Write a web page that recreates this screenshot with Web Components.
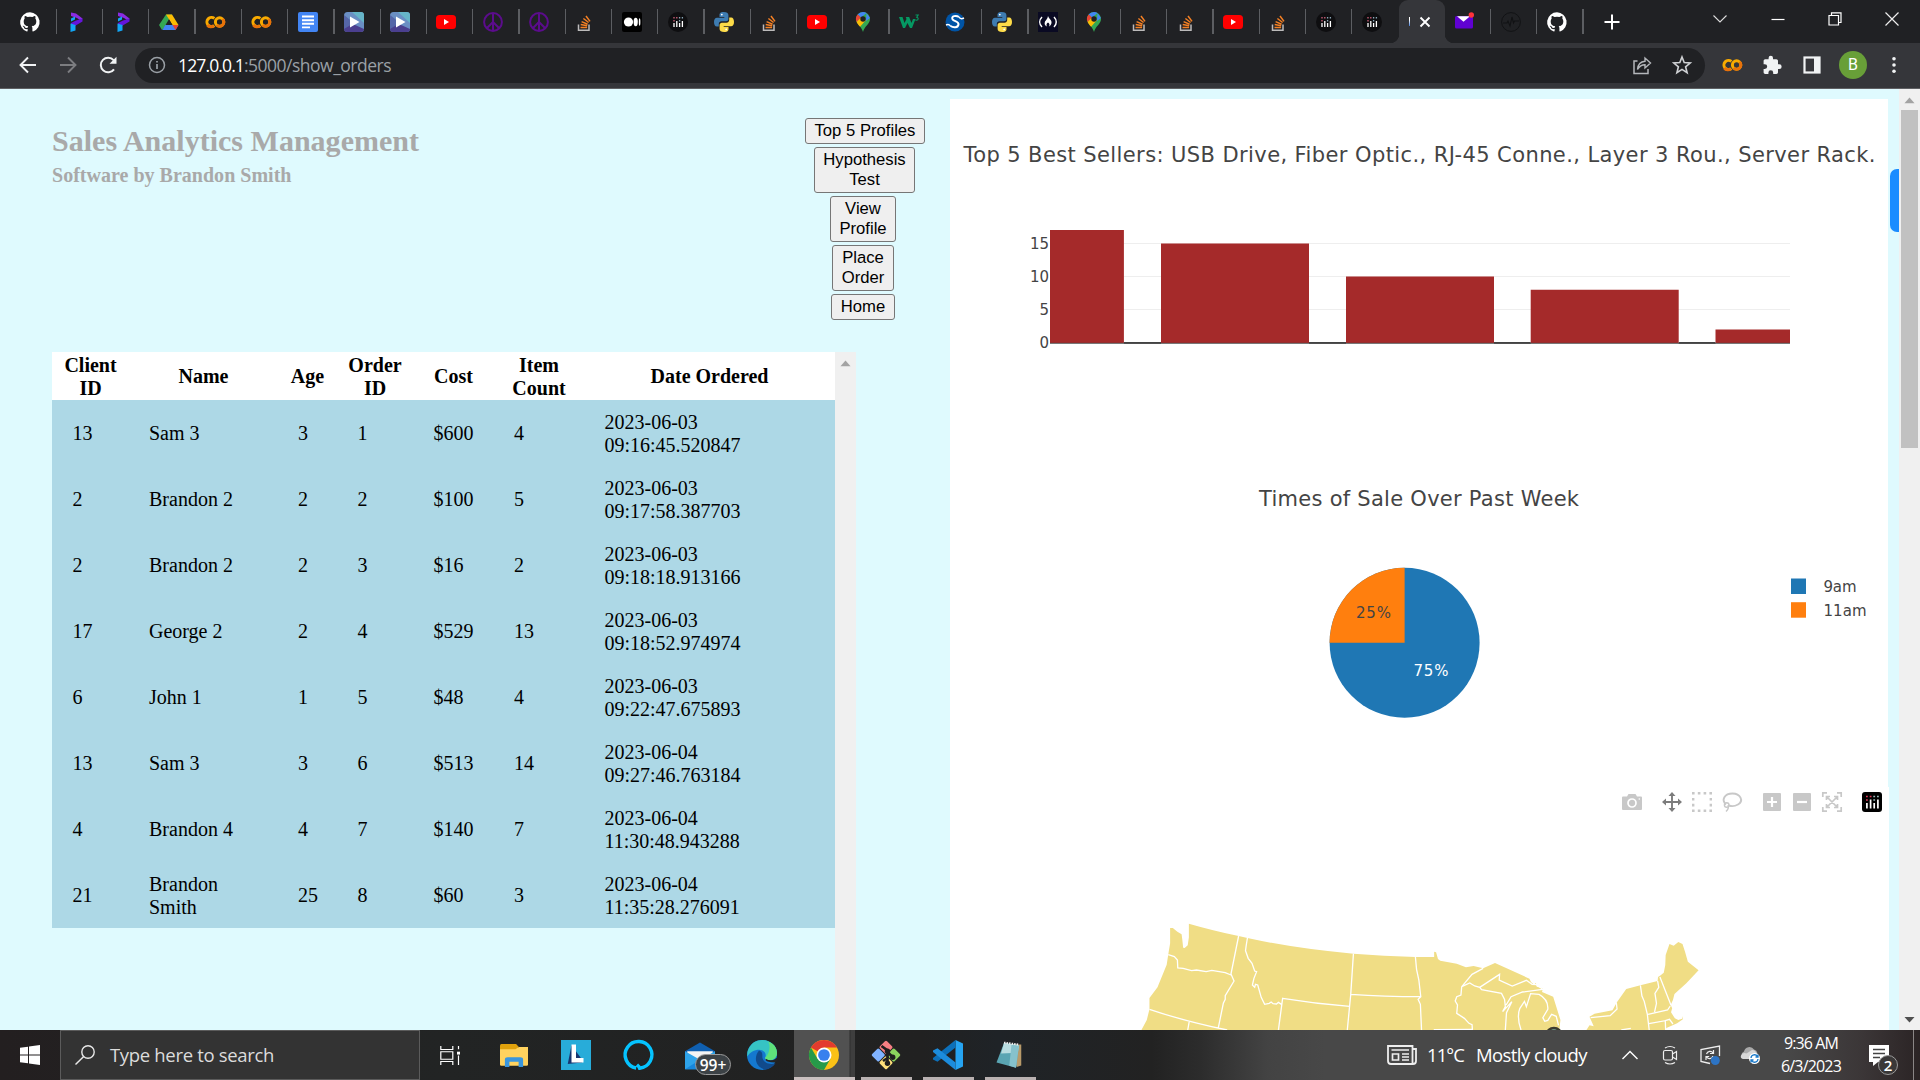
<!DOCTYPE html>
<html lang="en">
<head>
<meta charset="utf-8">
<title>Sales Analytics Management</title>
<style>
html,body{margin:0;height:100%;overflow:hidden;background:#dffafe}
</style>
</head>
<body>
<desktop-screen></desktop-screen>
<script>
const define = (name, html, setup) => {
  const t = document.createElement('template');
  t.innerHTML = html;
  customElements.define(name, class extends HTMLElement {
    connectedCallback() {
      if (this.shadowRoot) return;
      this.attachShadow({ mode: 'open' }).appendChild(t.content.cloneNode(true));
      if (setup) setup.call(this, this.shadowRoot);
    }
  });
};

/* ---------- icons ---------- */
const so = '<path d="M3.5 12.5v5.7h10.5v-5.7" fill="none" stroke="#bcbbbb" stroke-width="1.5"/><path d="M5.5 15.5h6.6M5.7 12.6l6.5 1.2M6.6 9.6l6 2.6M8.4 6.5l5.2 4M11 4l4 5.4" stroke="#f48024" stroke-width="1.5"/>';
const colab = '<g fill="none" stroke-width="3"><path d="M9.4 6.4a4.6 4.6 0 1 0 0 7.2" stroke="#f9ab00"/><circle cx="14.6" cy="10" r="4.2" stroke="#f9ab00"/><path d="M11.6 13a4.2 4.2 0 0 0 6-6" stroke="#e8710a"/><path d="M2.4 13a4.3 4.3 0 0 0 6.4.6" stroke="#e8710a"/></g>';
const bars = '<g stroke-width="1.3"><path d="M6 11v4M8.8 9v6M11.6 11v4M14.4 9v6" stroke="#fff"/><path d="M6 5v1.4M6 8v1.4M8.800 5v1.4" stroke="#d0607a"/><path d="M11.600 5v1.4M11.600 8v1.4M14.400 5v1.4" stroke="#8aa8b8"/></g>';
const ICONS = {
  github: '<path fill="#fff" d="M10 0.300a9.900 9.900 0 0 0-3.100 19.300c.5.1.7-.2.7-.5v-2c-2.800.6-3.400-1.200-3.400-1.200-.4-1.100-1.100-1.500-1.100-1.500-.9-.6.1-.6.1-.6 1 .1 1.500 1 1.500 1 .9 1.600 2.400 1.100 2.900.9.1-.7.4-1.100.6-1.400-2.200-.3-4.500-1.100-4.500-5 0-1.100.4-2 1-2.700-.1-.2-.4-1.200.1-2.600 0 0 .8-.3 2.700 1a9.600 9.600 0 0 1 5 0c1.900-1.300 2.700-1 2.700-1 .5 1.400.2 2.400.1 2.600.6.7 1 1.600 1 2.700 0 3.900-2.400 4.700-4.600 5 .4.300.7.900.7 1.900v2.800c0 .3.200.6.7.5A9.900 9.900 0 0 0 10 .3z"/>',
  pro: '<path d="M5 0.500L10 1.500 16.500 6.500 15.500 9 11 6 5 4z" fill="#8a2be2"/><path d="M16.500 6.500v3L8 14.500l-3-1V11l5-2.500z" fill="#6414dc"/><path d="M5 6.500l4-2v3L5 9.500zM4.500 11.500L9.500 13v5.500l-5 1.500z" fill="#12a5f4"/>',
  drive: '<path d="M7 2.500h6l-4 7-3 5.200-3 3.300-3-5z" fill="#34a853"/><path d="M7 2.500h6l6.500 10.500h-6z" fill="#fbbc04"/><path d="M3.300 18l3-5h13.200l-3 5z" fill="#4285f4"/><path d="M10 7.200L13.400 13H6.600z" fill="#202124"/><path d="M13.500 13h6l-3 5z" fill="#ea4335"/>',
  colab,
  docs: '<rect width="20" height="20" rx="2" fill="#4285f4"/><path d="M4 4.500h12M4 8.200h12M4 11.800h12M4 15.400h8" stroke="#fff" stroke-width="1.900"/>',
  play: '<rect width="20" height="20" rx="3.500" fill="#6a8fc4"/><path d="M3 0h14a3 3 0 0 1 3 3v8L8 0z" fill="#66b5c8"/><path d="M0 8l20 9a3 3 0 0 1-3 3H3a3 3 0 0 1-3-3z" fill="#4b3f8f"/><path d="M0 3l10 8L0 17z" fill="#5566a8"/><path d="M6 4.500l9.500 5.500L6 15.500z" fill="#fff"/>',
  youtube: '<rect y="3" width="20" height="14" rx="3.500" fill="#f00"/><path d="M8 7l5 3-5 3z" fill="#fff"/>',
  peace: '<g fill="none" stroke="#5b0c8c" stroke-width="2"><circle cx="10" cy="10" r="8.900"/><path d="M10 1v18M10 10l-6 6M10 10l6 6"/></g>',
  so,
  medium: '<rect width="20" height="20" rx="2" fill="#000"/><circle cx="6.500" cy="10" r="4.600" fill="#fff"/><ellipse cx="13.700" cy="10" rx="2.100" ry="4.200" fill="#fff"/><ellipse cx="17.600" cy="10" rx=".8" ry="3.800" fill="#fff"/>',
  plotly: '<circle cx="10" cy="10" r="10" fill="#0e0e10"/>' + bars,
  plotsq: '<rect width="20" height="20" rx="3" fill="#000"/><g stroke-width="1.700"><path d="M4.900 11v5.500M12.200 11v5.500" stroke="#fff"/><path d="M8.600 7.500v9M15.900 7.500v9" stroke="#fff"/><path d="M4 4.500h1.800M4 8h1.800M7.700 4.500h1.800" stroke="#e0395a"/><path d="M11.300 4.500h1.800M11.300 8h1.800M15 4.500h1.800" stroke="#9bb"/></g>',
  python: '<path d="M9.800 0C6 0 5.500 1.500 5.500 3v2h4.800v.8H3C1 5.800 0 7.500 0 10s1 4.500 2.800 4.500h2V12c0-1.600 1.200-2.700 2.700-2.700h4.600c1.300 0 2.300-1 2.300-2.300V3c0-2-1.700-3-4.600-3z" fill="#3e7cb1"/><path d="M10.200 20c3.800 0 4.300-1.500 4.300-3v-2H9.700v-.8H17c2 0 3-1.700 3-4.200s-1-4.500-2.800-4.500h-2V8c0 1.600-1.200 2.700-2.700 2.700H7.900c-1.300 0-2.300 1-2.300 2.300v4c0 2 1.700 3 4.600 3z" fill="#fddb48"/><circle cx="7.800" cy="2.600" r=".9" fill="#fff"/><circle cx="12.200" cy="17.400" r=".9" fill="#fff"/>',
  maps: '<path d="M10 0a7 7 0 0 0-7 7c0 5 5.500 7 7 13 1.500-6 7-8 7-13a7 7 0 0 0-7-7z" fill="#34a853"/><path d="M10 0a7 7 0 0 0-5.400 2.600L8 5.500 13.500.9A7 7 0 0 0 10 0z" fill="#4285f4"/><path d="M4.600 2.600A7 7 0 0 0 3.600 10L8 5.500z" fill="#ea4335"/><path d="M3.600 10c.8 1.800 2.200 3.200 3.500 4.800L13 8 7.500 6z" fill="#fbbc04"/><path d="M13.500.9L17 6l-4 3z" fill="#4285f4"/><circle cx="10" cy="7" r="2.700" fill="#202124"/>',
  w3: '<path d="M0 5h3.500l2 6 2-4-.8-2h3.500l2.200 6L14 7h2.500l-3.500 9h-2L8.500 11 6 16H4z" fill="#059862"/><path d="M16.500 3h2.700l-1.500 2.300c2 0 2 3-.2 3l-1.200-.3" fill="none" stroke="#059862" stroke-width="1.100"/>',
  scipy: '<circle cx="10" cy="10" r="9.500" fill="#0054a6"/><path d="M14 5c-3-2-8-1-6.500 2.200C8.700 9.500 14 9 13.500 12.500c-.5 3.200-5 3.500-8 1.500" fill="none" stroke="#fff" stroke-width="2"/><path d="M14 5c1 2 3 2 5 1M1 13c2-1 3-1 4.500 1" fill="none" stroke="#fff" stroke-width="1.400"/>',
  fcc: '<rect width="20" height="20" fill="#0a0a23"/><g fill="none" stroke="#fff" stroke-width="1.500"><path d="M4 5c-3 3-3 7 0 10M16 5c3 3 3 7 0 10"/></g><path d="M10 4c1 3 4 4 3.500 7-.3 2-1.500 3-2.500 3.500 1-2 .500-3-1-4-1.500 1-2 2-1 4C7 14 6 12 7 9.500 8 8 9.500 7 10 4z" fill="#fff"/>',
  mail: '<rect x="1" y="4" width="18" height="12.500" rx="1.500" fill="#6001d2"/><path d="M3 4.300h13l-6.500 5.400z" fill="#fff"/><circle cx="17.300" cy="3" r="2.700" fill="#ff333a"/>',
  pulse: '<circle cx="10" cy="10" r="9.400" fill="none" stroke="#111214" stroke-width="1"/><path d="M2 11h4l1-2 2 5 2-9 1.500 6 1-2h4.500" fill="none" stroke="#111214" stroke-width="1.100"/>',
  close: '<path d="M5.500 5.500l9 9M14.500 5.500l-9 9" stroke="#fff" stroke-width="1.900"/>',
  plus: '<path d="M10 2.500v15M2.500 10h15" stroke="#fff" stroke-width="2"/>',
  chev: '<path d="M3.500 6.500L10 13l6.500-6.500" fill="none" stroke="#ddd" stroke-width="1.100"/>',
  min: '<path d="M3.500 10.500h13" stroke="#fff" stroke-width="1.200"/>',
  restore: '<path d="M4 6.500h9.500V16H4zM6.500 6V3.800H16v9.700h-2.200" fill="none" stroke="#fff" stroke-width="1.200"/>',
  x: '<path d="M3.500 3.500l13 13M16.500 3.500l-13 13" stroke="#eee" stroke-width="1.200"/>',
  back: '<path d="M18 10H3M10 2.500L2.500 10l7.500 7.500" fill="none" stroke="#f1f3f4" stroke-width="1.900"/>',
  fwd: '<path d="M2 10h15M10 2.500l7.500 7.500-7.500 7.500" fill="none" stroke="#7c7d80" stroke-width="1.900"/>',
  reload: '<path d="M16 14.300A7.300 7.300 0 1 1 15.600 5.200" fill="none" stroke="#f1f3f4" stroke-width="2"/><path d="M18.500 1.800v7h-7z" fill="#f1f3f4"/>',
  info: '<circle cx="10" cy="10" r="7.500" fill="none" stroke="#9aa0a6" stroke-width="1.500"/><path d="M10 9v5M10 6v1.600" stroke="#9aa0a6" stroke-width="1.700"/>',
  share: '<path d="M5.500 6H2v12.500h14V14" fill="none" stroke="#b4b7bb" stroke-width="1.500"/><path d="M5.500 14.500C6 9 8.500 6.600 13 6.300V3l5.500 5-5.500 5V9.800c-3.500 0-5.500 1.400-7.500 4.700z" fill="none" stroke="#b4b7bb" stroke-width="1.400"/>',
  star: '<path d="M10 2l2.200 5.600 6 .4-4.600 3.800 1.500 5.900L10 14.400l-5.100 3.300 1.500-5.900L1.800 8l6-.4z" fill="none" stroke="#cfd1d4" stroke-width="1.600"/>',
  puzzle: '<path d="M17.300 9.300H16V6c0-1-.7-1.700-1.700-1.700H11V3a2.200 2.200 0 0 0-4.400 0v1.300H3.200C2.300 4.300 1.600 5 1.600 6v3.200h1.200a2.400 2.400 0 0 1 0 4.800H1.600v3.200c0 1 .7 1.700 1.600 1.700h3.200v-1.200a2.400 2.400 0 0 1 4.800 0V19h3.100c1 0 1.700-.8 1.700-1.700V14h1.300a2.300 2.300 0 0 0 0-4.700z" fill="#f1f3f4"/>',
  side: '<rect x="2.500" y="2.500" width="15" height="15" fill="none" stroke="#f1f3f4" stroke-width="2.200"/><path d="M12 2h6v16h-6z" fill="#f1f3f4"/>',
  dots: '<g fill="#f1f3f4"><circle cx="10" cy="3.800" r="1.800"/><circle cx="10" cy="10" r="1.800"/><circle cx="10" cy="16.200" r="1.800"/></g>',
  up: '<path d="M5.200 13.500L10 8l4.800 5.500z" fill="#a3a3a3"/>',
  down: '<path d="M5 7.500h10L10 12.800z" fill="#505050"/>',
  windows: '<path d="M0 2.800l8-1.100V9.500H0zM9 1.600L20 0v9.500H9zM0 10.500h8v7.800l-8-1.100zM9 10.500h11V20L9 18.400z" fill="#fff"/>',
  search: '<circle cx="13" cy="7" r="6.200" fill="none" stroke="#e8e8e8" stroke-width="1.400"/><path d="M8.700 11.500L.5 19.500" stroke="#e8e8e8" stroke-width="1.500"/>',
  task: '<g fill="none" stroke="#fff" stroke-width="1.200"><path d="M.8 0v3.700h12V0M.8 20v-3.700h12V20M.8 6h12v8H.8zM18.500 0v3.500M18.500 10v10"/></g><rect x="17" y="6" width="3" height="3" fill="#fff"/>',
  folder: '<path d="M0 1.500Q0 0 1 0h10.500l1.500 2v4H0z" fill="#e0a10c"/><path d="M0 4.500h11l2.500-2H20V18q0 1-1 1H1q-1 0-1-1z" fill="#ffd25e"/><path d="M3.500 20v-6.500q0-2 2-2h9q2 0 2 2V20h-3.200v-4.500H6.700V20z" fill="#3a96dd"/>',
  ell: '<rect width="20" height="20" fill="#28acd9"/><path d="M7 3.500L4.500 16 14 15v-2z" fill="#17356f"/><path d="M7 3h3v9h5v3H7z" fill="#fff"/>',
  alexa: '<path d="M8.800 18.700a8.900 8.900 0 1 1 2.300.1c-.3-1-1-1.600-1.800-2.300" fill="none" stroke="#05c3ff" stroke-width="2.300"/>',
  outlook: '<path d="M0 7L10 1l10 6v12H0z" fill="#0f5fb0"/><path d="M1.500 7h17v3L10 15 1.500 10z" fill="#f4f4f4"/><path d="M0 7l10 6 10-6v12.500H0z" fill="#2ea3ea"/><path d="M0 19.500L10 13l10 6.500z" fill="#1787dc"/>',
  edge: '<circle cx="10" cy="10" r="10" fill="#1478cf"/><path d="M1 6C3 1.500 7-.2 10.500 0 16 .2 20 4 20 8.500c0 3-2 5-5 5-2 0-3-.9-3-1.500 1.500-2.500-.5-5.500-4-5.500C5 6.500 2 8 .2 11 0 9 .3 7.500 1 6z" fill="#36c3c4"/><path d="M14 1q6 2.500 6 7.500c0 3-2 5-5 5-2 0-3-.9-3-1.500 3-3 4-8 2-11z" fill="#5fe27a"/><path d="M8 7c-4 5-2 11 4 12.800 3-.3 5.500-2 7-4.300-3 1-7.500.500-8.700-3.500C10 10 11 8 8 7z" fill="#114a8b"/><path d="M20.500 11.500Q16.500 15 12.500 12.500 11.500 15 19.500 15z" fill="#242424"/>',
  chrome: '<circle cx="10" cy="10" r="10" fill="#fbc116"/><path d="M10 10L1.300 5A10 10 0 0 1 18.700 5H10z" fill="#e33b2e"/><path d="M1.300 5A10 10 0 0 0 10 20l4.300-7.500L10 10 5.700 12.500z" fill="#269a49"/><circle cx="10" cy="10" r="5" fill="#fff"/><circle cx="10" cy="10" r="3.900" fill="#3780ee"/>',
  git: '<g transform="rotate(45 10 10)"><rect x="3" y="3" width="6.700" height="6.700" rx="1" fill="#f77f83"/><rect x="10.300" y="3" width="6.700" height="6.700" rx="1" fill="#8bd35e"/><rect x="3" y="10.300" width="6.700" height="6.700" rx="1" fill="#80b3ff"/><rect x="10.300" y="10.300" width="6.700" height="6.700" rx="1" fill="#ffe07a"/></g><path d="M7 4l4 3v9M11 8l4 4M11 12l-3 2" fill="none" stroke="#1e1e1e" stroke-width="1.800"/><circle cx="11" cy="7.500" r="1.800" fill="#1e1e1e"/><circle cx="14.500" cy="11.500" r="1.800" fill="#1e1e1e"/><circle cx="11" cy="15.500" r="1.800" fill="#1e1e1e"/>',
  vs: '<path d="M15 0l5 2.300v15.400L15 20z" fill="#26a4f2"/><path d="M15 0v5L3 14.500 0 13v-1z" fill="#0c70ba"/><path d="M15 20v-5L3 5.500 0 7v1z" fill="#1c8cdc"/>',
  notepad: '<path d="M9 3l8.500 0 0 14-3 1z" fill="#b89a6a"/><path d="M6 2l10 1.500L14 18.500 1 15z" fill="#5aa5b3"/><path d="M6 2l10 1.500-.8 5L4 9z" fill="#b8dce0"/><path d="M11 3l5 .6L14 18.500l-4.500-1.300z" fill="#86c2cc"/><path d="M6 1.800l10 1.300" stroke="#eee" stroke-width="1.400" stroke-dasharray="1 .7"/>',
  news: '<path d="M1 1h24.500v18H4q-3 0-3-3zM25.500 4H29v12q0 3-3 3H4" fill="none" stroke="#eee" stroke-width="1.800"/><path d="M4.500 5h17.500M15 9h7M15 12h7M15 15h7" stroke="#eee" stroke-width="1.500"/><path d="M5.500 9h6v6h-6z" fill="none" stroke="#eee" stroke-width="1.700"/>',
  caret: '<path d="M2.500 14L10 6.500l7.500 7.500" fill="none" stroke="#fff" stroke-width="1.400"/>',
  meet: '<g fill="none" stroke="#eee" stroke-width="1.200"><rect x="3.500" y="5.500" width="9" height="9.500" rx="1.500"/><path d="M12.500 9l4-2.500v8l-4-2.500M5 3q5-3 10 0M5 17.500q5 3 10 0"/></g>',
  update: '<path d="M10 18.500L1 16.500V4.500L19.500 1v10" fill="none" stroke="#eee" stroke-width="1.300"/><path d="M6.500 9c1-3 5-3.500 6.500-1M13.500 5v3.500H10M13 11c-1 3-4.500 3.500-6.300 1M6 15v-3.500h3.200" fill="none" stroke="#eee" stroke-width="1.200"/><circle cx="15.300" cy="15.500" r="4.500" fill="#2d74c4"/>',
  cloud: '<path d="M4 14a4 4 0 0 1 0-7.500 5.500 5.500 0 0 1 10-2A5 5 0 0 1 16 13z" fill="#aaa"/><path d="M3 14q-3-1-2-3.500Q3 7 6.500 8.500L12 5q4 0 5 5v4z" fill="#d8d8d8"/><circle cx="14.500" cy="13.500" r="5.500" fill="#fff"/><path d="M11 13a3.500 3.500 0 0 1 6.500-1.500M18 9.500v2.500h-2.500M18 14a3.500 3.500 0 0 1-6.500 1.500M11 17.500V15h2.500" fill="none" stroke="#1878c8" stroke-width="1.300"/>',
  note: '<path d="M0 0h20v17H9l-5 4v-4H0z" fill="#fff"/><path d="M4 4.500h12M4 8.500h12M4 12.500h7" stroke="#444" stroke-width="1.400"/>',
  camera: '<path d="M1 4.500h4L6.500 2h7L15 4.500h4q1 0 1 1V17q0 1-1 1H1q-1 0-1-1V5.500q0-1 1-1z" fill="#c8c8c8"/><circle cx="10" cy="11" r="4" fill="none" stroke="#fff" stroke-width="1.700"/><circle cx="17.300" cy="7" r=".8" fill="#fff"/>',
  pan: '<path d="M10 2v16M2 10h16" stroke="#7c7c7c" stroke-width="1.900"/><path d="M10 0l3.500 4h-7zM10 20l3.500-4h-7zM0 10l4-3.500v7zM20 10l-4-3.500v7z" fill="#7c7c7c"/>',
  select: '<g fill="none" stroke="#c8c8c8" stroke-width="2.400"><path d="M0 1.200h20M0 18.800h20" stroke-dasharray="2.600 3.200"/><path d="M1.200 6v10M18.800 6v10" stroke-dasharray="2.600 3.200"/></g>',
  lasso: '<g fill="none" stroke="#c8c8c8" stroke-width="1.900"><path d="M4 12.500C-1 8 2.500 1.500 10.500 1.500S22 9 16 12.500c-3.500 2-7 1.800-9 1"/><circle cx="4.700" cy="13" r="2.300" stroke-width="1.400"/><path d="M6 13q1.500 3-2 6.500" stroke-width="1.400"/></g>',
  zin: '<rect x="1" y="1" width="18" height="18" rx="1" fill="#c8c8c8"/><path d="M10 5v10M5 10h10" stroke="#fff" stroke-width="2.200"/>',
  zout: '<rect x="1" y="1" width="18" height="18" rx="1" fill="#c8c8c8"/><path d="M5 10h10" stroke="#fff" stroke-width="2.200"/>',
  auto: '<g fill="none" stroke="#c8c8c8" stroke-width="1.700"><path d="M.8 5V.8H5M15 .8h4.200V5M19.200 15v4.200H15M5 19.200H.8V15"/><path d="M5 5l10 10M15 5L5 15M4.500 8V4.500H8M12 4.500h3.500V8M15.500 12v3.500H12M8 15.500H4.500V12"/></g>'
};
define('ui-icon', '<style>:host{display:block;flex:none}svg{display:block;overflow:visible}</style><div></div>', function (r) {
  const w = this.getAttribute('w') || 20, h = this.getAttribute('h') || w;
  const vb = this.getAttribute('box') || '0 0 20 20';
  r.querySelector('div').innerHTML = `<svg width="${w}" height="${h}" viewBox="${vb}" preserveAspectRatio="none">${ICONS[this.getAttribute('name')]}</svg>`;
});

/* Sets its text to a fixed advance width by letter spacing. */
define('fit-text', '<style>:host{display:inline-block;white-space:nowrap}</style><span><slot></slot></span>', function (r) {
  const w = +this.getAttribute('w'), s = r.querySelector('span');
  this.style.letterSpacing = ((w - s.getBoundingClientRect().width) / this.textContent.length) + 'px';
});

/* ---------- browser chrome ---------- */
define('tab-item', `<style>
:host{display:flex;width:46.27px;height:43px;flex:none;align-items:center;box-sizing:border-box;padding-left:9.4px;justify-content:space-between}
i{width:1.3px;height:25px;background:#5c5e62}
:host([plain]) i{background:none}
</style><slot></slot><i></i>`);
define('active-tab', `<style>
:host{display:flex;width:46.27px;height:43px;flex:none;background:#35363a;border-radius:9px 9px 0 0;align-items:center;position:relative;box-sizing:border-box;padding-left:10px;gap:5px}
:host::before,:host::after{content:"";position:absolute;bottom:0;width:9px;height:9px}
:host::before{left:-9px;background:radial-gradient(circle at 0 0,transparent 9px,#35363a 9.500px)}
:host::after{right:-9px;background:radial-gradient(circle at 100% 0,transparent 9px,#35363a 9.500px)}
i{width:1.500px;height:9px;background:linear-gradient(#fff 30%,#4a80d8)}
</style><i></i><ui-icon name="close" w="20"></ui-icon>`);
define('tab-strip', `<style>
:host{display:block}
.row{display:flex;height:43px;background:#202124;padding-left:10.700px;box-sizing:border-box}
.c{display:flex;align-items:center;justify-content:center;width:57.300px;height:37px;flex:none}
.p{width:56px;height:43px}
.g{width:52px;flex:none}
</style><div class="row"></div>`, function (r) {
  const names = 'github pro pro drive colab colab docs play play youtube peace peace so medium plotly python so youtube maps w3 scipy python fcc maps so so youtube so plotly plotly * mail pulse github'.split(' ');
  const html = names.map((n, i) => n === '*' ? '<active-tab></active-tab>' : `<tab-item${i === 29 ? ' plain' : ''}><ui-icon name="${n}"></ui-icon></tab-item>`).join('');
  r.querySelector('.row').innerHTML = html + '<div class="c p"><ui-icon name="plus"></ui-icon></div><div class="g"></div>' + ['chev', 'min', 'restore', 'x'].map(n => `<div class="c"><ui-icon name="${n}"></ui-icon></div>`).join('');
});
define('tool-bar', `<style>
:host{display:flex;height:46px;box-sizing:border-box;background:#35363a;border-bottom:1px solid #5f6063;align-items:center;padding:0 0 1px 18px;font:17.500px "Open Sans","Noto Sans",sans-serif;color:#9aa0a6}
.n{display:flex;gap:20px;width:117px;flex:none}
.o{display:flex;align-items:center;width:1570px;height:35px;box-sizing:border-box;border-radius:18px;background:#202124;padding:0 13px 0 12px;flex:none}
.t{margin-left:11px;flex:1;line-height:34px;display:flex}
b{font-weight:400;color:#fff}
.r{display:flex;align-items:center;gap:20px;margin-left:17px}
.a{width:28px;height:28px;border-radius:50%;background:#689f38;color:#fff;font:16px/28px Roboto,sans-serif;text-align:center;margin:0 -3px 0 -3px}
.star{margin-left:20px}
</style>
<div class="n"><ui-icon name="back"></ui-icon><ui-icon name="fwd"></ui-icon><ui-icon name="reload"></ui-icon></div>
<div class="o"><ui-icon name="info"></ui-icon><div class="t"><b><fit-text w="66">127.0.0.1</fit-text></b><fit-text w="147">:5000/show_orders</fit-text></div><ui-icon name="share"></ui-icon><ui-icon class="star" name="star"></ui-icon></div>
<div class="r"><ui-icon name="colab"></ui-icon><ui-icon name="puzzle"></ui-icon><ui-icon name="side"></ui-icon><div class="a">B</div><ui-icon name="dots"></ui-icon></div>`);

/* ---------- page: left ---------- */
define('nav-button', `<style>
:host{display:block}
button{display:block;box-sizing:border-box;font:16.670px/20px "Liberation Sans",Arial,sans-serif;color:#000;background:#efefef;border:1px solid #767676;border-radius:3px;padding:2px 0;margin:0;text-align:center}
</style><button><slot></slot></button>`, function (r) { r.querySelector('button').style.width = this.getAttribute('w') + 'px'; });
define('page-header', `<style>
:host{display:flex;height:263px;box-sizing:border-box;padding:29px 25px 0 52px;justify-content:space-between;color:#a9a9a9;font-family:"Liberation Serif","Times New Roman",serif}
h2{margin:6px 0 0;font-size:30px;line-height:34px}
h4{margin:6px 0 0;font-size:20px;line-height:23px}
nav{display:flex;flex-direction:column;align-items:center;gap:3px}
nav-button:nth-child(2){margin-right:1px}
nav-button:nth-child(n+3){margin-right:4px}
</style>
<div><h2><fit-text w="367">Sales Analytics Management</fit-text></h2><h4><fit-text w="239.500">Software by Brandon Smith</fit-text></h4></div>
<nav><nav-button w="120">Top 5 Profiles</nav-button><nav-button w="101">Hypothesis<br>Test</nav-button><nav-button w="66">View<br>Profile</nav-button><nav-button w="62">Place<br>Order</nav-button><nav-button w="64">Home</nav-button></nav>`);
const ROWS = [
  [13, 'Sam 3', 3, 1, '$600', 4, '2023-06-03', '09:16:45.520847'],
  [2, 'Brandon 2', 2, 2, '$100', 5, '2023-06-03', '09:17:58.387703'],
  [2, 'Brandon 2', 2, 3, '$16', 2, '2023-06-03', '09:18:18.913166'],
  [17, 'George 2', 2, 4, '$529', 13, '2023-06-03', '09:18:52.974974'],
  [6, 'John 1', 1, 5, '$48', 4, '2023-06-03', '09:22:47.675893'],
  [13, 'Sam 3', 3, 6, '$513', 14, '2023-06-04', '09:27:46.763184'],
  [4, 'Brandon 4', 4, 7, '$140', 7, '2023-06-04', '11:30:48.943288'],
  [21, 'Brandon<br>Smith', 25, 8, '$60', 3, '2023-06-04', '11:35:28.276091']];
define('order-table', `<style>
:host{display:flex;height:678px;padding-left:52px;font:20px/23px "Liberation Serif","Times New Roman",serif;color:#000}
table{border-collapse:collapse;table-layout:fixed;width:783px;align-self:flex-start}
th{background:#fff;height:48px;padding:1px 0 0;vertical-align:middle;box-sizing:border-box}
td{background:#add8e6;height:66px;padding:1px 0 0 20px;vertical-align:middle;box-sizing:border-box}
td:nth-child(1),td:nth-child(4),td:nth-child(5),td:nth-child(7){padding-left:20.500px}
.s{width:21px;background:#f0f0f0}
</style><table><colgroup>${[77, 149, 59, 76, 81, 90, 251].map(w => `<col style="width:${w}px">`).join('')}</colgroup>
<thead><tr><th>Client<br>ID</th><th>Name</th><th>Age</th><th>Order<br>ID</th><th>Cost</th><th>Item<br>Count</th><th>Date Ordered</th></tr></thead>
<tbody>${ROWS.map(r => '<tr>' + r.slice(0, 6).map(c => `<td>${c}</td>`).join('') + `<td>${r[6]}<br>${r[7]}</td></tr>`).join('')}</tbody></table>
<div class="s"><ui-icon name="up" w="21"></ui-icon></div>`);

/* ---------- page: charts ---------- */
const chartStyle = '<style>:host{display:block}svg{display:block;overflow:hidden;font-family:"DejaVu Sans",Verdana,sans-serif;fill:#444}.t{font-size:21px}.a{font-size:15px}</style>';
define('bar-chart', chartStyle + `<svg width="938" height="344" viewBox="950 99 938 344">
<text class="t" x="963.500" y="162" textLength="912">Top 5 Best Sellers: USB Drive, Fiber Optic., RJ-45 Conne., Layer 3 Rou., Server Rack.</text>
<path d="M1050 243.500h740M1050 276.500h740M1050 309.500h740" stroke="#eee"/>
<g fill="#a52a2a"><path d="M1050 230h73.900v113h-73.900zM1161 243.400h148v99.600h-148zM1346 276.500h148v66.500h-148zM1530.700 289.700h148v53.300h-148zM1715.500 329.500h74.500V343h-74.500z"/></g>
<path d="M1123.900 342.800h37.100M1309 342.800h37M1494 342.800h36.700M1678.700 342.800h36.800" stroke="#444" stroke-width="1.700"/><path d="M1050 343.300h740" stroke="#444" stroke-width=".9"/>
<g class="a" text-anchor="end"><text x="1049" y="249" textLength="19">15</text><text x="1049" y="282" textLength="19">10</text><text x="1049" y="315">5</text><text x="1049" y="348">0</text></g></svg>`);
define('pie-chart', chartStyle + `<svg width="938" height="344" viewBox="950 443 938 344">
<text class="t" x="1259" y="505.500" textLength="320">Times of Sale Over Past Week</text>
<circle cx="1404.600" cy="642.800" r="75" fill="#1f77b4"/><path d="M1404.600 642.800v-75a75 75 0 0 0-75 75z" fill="#ff7f0e"/>
<g class="a"><text x="1356" y="618" textLength="35">25%</text><text x="1413.500" y="676" textLength="35" fill="#fff">75%</text>
<text x="1823.500" y="592" textLength="33">9am</text><text x="1823.500" y="616" textLength="43">11am</text></g>
<path d="M1791 578.500h15v15.500h-15z" fill="#1f77b4"/><path d="M1791 602.200h15v15.500h-15z" fill="#ff7f0e"/></svg>`);
define('mode-bar', `<style>:host{display:flex;height:31px;align-items:center;justify-content:flex-end;padding:0 7px 1px 0;gap:10px;box-sizing:border-box}
.s{margin-left:10px}.l{margin-left:10px}</style>
<ui-icon name="camera" w="20"></ui-icon><ui-icon class="s" name="pan"></ui-icon><ui-icon name="select"></ui-icon><ui-icon name="lasso"></ui-icon><ui-icon class="l" name="zin"></ui-icon><ui-icon name="zout"></ui-icon><ui-icon name="auto"></ui-icon><ui-icon class="l" name="plotsq"></ui-icon>`);
define('state-map', `<style>:host{display:block;padding:82px 0 0 170px}svg{display:block}path{vector-effect:non-scaling-stroke}</style>
<svg width="600" height="130" viewBox="0 0 1568 390" preserveAspectRatio="none">
<g fill="#f0dd85"><path d="M131 84L138 84 150 95 161 103 163 121 165 143 169 144 177 136 180 112 180 71Q240 91 310 108L333 114Q460 146 610 161L690 167 772 171 821 171 821 155 826 157 831 177 837 182 880 191 904 202 924 198 949 205 980 189 1070 236 1074 246 1082 254 1087 249 1089 260 1105 265 1103 276 1132 290 1151 360 1148 390 56 390 70 360 77 328 77 294 98 262 122 194 126 164 131 130Z"/>
<path d="M1219 390L1227 376 1238 379 1227 350 1240 341 1287 331 1299 306 1323 267 1360 256 1405 243 1406 231 1413 226 1421 218 1425 195 1426 165 1436 132 1447 137 1459 126 1470 132 1477 157 1484 185 1512 211 1480 250 1449 282 1445 300 1439 315 1443 325 1440 337 1450 355 1459 360 1469 356 1469 348 1471 358 1456 370 1428 384 1425 390Z"/></g>
<g fill="none" stroke="#fff" stroke-width="1.300">
<path d="M126 164L142 170 150 180 151 204 165 205 187 212 200 210 225 215 240 211 275 218 290 225M310 108L290 222 298 243 275 287 275 298 270 310 257 383M333 114L330 135 328 152 335 175 345 190 352 213 357 215 350 235 346 255 352 262 354 253 360 255 369 292 378 313 390 310 395 306 400 311 409 312 414 307 422 313M77 328Q170 364 280 390M181 364L177 390M414 390L425 295Q510 311 600 319M610 161L603 283 594 390M603 283Q690 290 786 290M772 171L775 208 781 240 786 290 779 298 785 313 788 390M820 389L921 388"/>
<path d="M949 205L920 223 893 260 891 285 880 290 876 303 882 315 880 340 900 355 912 370 920 374 921 390M893 260L914 249 927 258 940 262 945 269 997 280 1005 298 1007 320 1000 335 1024 305 1010 338 1007 390M940 262L992 223 991 240 1025 258 1062 241 1077 253 1088 254 1105 268 1052 276 1022 290 1009 315M1048 390Q1036 350 1045 325L1057 304 1062 320 1073 281 1095 283Q1120 298 1118 328L1105 353 1110 364 1118 361 1128 343 1140 349 1146 376"/>
<path d="M1230 353L1281 347 1299 327 1297 308M1360 256L1364 288 1370 304 1378 342 1383 390M1405 243L1408 262 1398 280 1402 310 1397 336M1411 231L1440 316M1380 343L1431 330 1438 318M1382 371L1425 362 1426 390M1425 362L1436 358 1445 372M1310 390L1335 385"/></g>
<ellipse cx="1134" cy="404" rx="22" ry="24" fill="#3c3b30"/><ellipse cx="1134" cy="401" rx="12" ry="14" fill="#6d9386"/></svg>`);
define('page-scroll', `<style>:host{display:flex;flex-direction:column;align-items:center;width:21px;height:941px;background:#f0f0f0;flex:none}
i{width:17px;height:338px;background:#c1c1c1}b{flex:1}</style><ui-icon name="up" w="21"></ui-icon><i></i><b></b><ui-icon name="down" w="21"></ui-icon>`);
define('web-page', `<style>
:host{display:flex;height:941px;background:#dffafe;overflow:hidden}
.l{width:950px;flex:none}
.r{width:939px;flex:none;margin-top:10px;height:931px}
.c{background:#fff;width:938px}.m{background:#fff;height:243px;overflow:hidden}
.e{width:10px;display:flex;flex-direction:column;align-items:flex-end}
.e i{margin-top:80px;width:9px;height:63px;background:#1a8cff;border-radius:7px 0 0 7px}
</style>
<div class="l"><page-header></page-header><order-table></order-table></div>
<div class="r"><div class="c"><bar-chart></bar-chart><pie-chart></pie-chart></div><div class="m"><mode-bar></mode-bar><state-map></state-map></div></div>
<div class="e"><i></i></div><page-scroll></page-scroll>`);

/* ---------- taskbar ---------- */
define('task-button', `<style>
:host{display:flex;width:62px;height:50px;align-items:center;justify-content:center;box-sizing:border-box;flex:none}
:host([open]){background:linear-gradient(#b9b1b1,#b9b1b1) center bottom/51px 3px no-repeat}
:host([current]){background:linear-gradient(#c9bfbf,#c9bfbf) 1px bottom/61px 3px no-repeat,linear-gradient(90deg,transparent 1px,#515151 1px,#515151 56px,#2e2e2e 57px,#3e3e3e 58px)}
</style><slot></slot>`);
define('task-bar', `<style>
:host{display:flex;height:50px;color:#fff;font:18.500px/24px "Open Sans","Noto Sans",sans-serif;background:linear-gradient(90deg,#231f20 0,#222424 23%,#212121 48%,#1f2327 52%,#222 60%,#2c2c2c 62.500%,#434343 66%,#484848 69%,#484848 93%,#3b3637 97%,#2b2425 100%)}
.s{display:flex;align-items:center;width:360px;box-sizing:border-box;height:50px;border:1px solid #5b5b5b;background:#333;padding-left:14px;color:#dcdcdc;gap:15px}
.st{width:60px;display:flex;align-items:center;justify-content:center;height:50px}
.b{position:relative}
.b span{position:absolute;left:10px;top:13px;width:36px;height:21px;box-sizing:border-box;border:1px solid #9a9a9a;border-radius:11px;background:#3c4246;font-weight:600;font-size:15.500px;line-height:20px;text-align:center}
.w{display:flex;align-items:center;margin-left:346px;width:223px}
.w fit-text{margin-left:11px}
.w fit-text:first-of-type{margin-left:10px;margin-right:1px}
.i{display:flex;align-items:center;justify-content:center;width:40px;flex:none}
.i:nth-last-of-type(n+5){width:40px}
.k{width:82px;padding-right:2px;box-sizing:content-box;font-size:16px;line-height:23px;display:flex;flex-direction:column;align-items:center;padding-top:2px}
.n{width:60px;border-right:1px solid #8a8686;display:flex;align-items:center;padding-left:15px;box-sizing:border-box}
.n .b span{position:absolute;left:9px;top:10px;width:20px;height:20px;border-radius:50%;background:#3a3838;font-size:15px;line-height:18px}
</style>
<div class="st"><ui-icon name="windows"></ui-icon></div>
<div class="s"><ui-icon name="search"></ui-icon><fit-text w="164">Type here to search</fit-text></div>
<task-button style="width:63px;padding-right:3px"><ui-icon name="task" w="20" h="19"></ui-icon></task-button>
<task-button><ui-icon name="folder" w="28" h="23"></ui-icon></task-button>
<task-button><ui-icon name="ell" w="30"></ui-icon></task-button>
<task-button><ui-icon name="alexa" w="30"></ui-icon></task-button>
<task-button><div class="b"><ui-icon name="outlook" w="30" h="29"></ui-icon><span>99+</span></div></task-button>
<task-button><ui-icon name="edge" w="30"></ui-icon></task-button>
<task-button current><ui-icon name="chrome" w="30"></ui-icon></task-button>
<task-button open><ui-icon name="git" w="30"></ui-icon></task-button>
<task-button open><ui-icon name="vs" w="30"></ui-icon></task-button>
<task-button open><ui-icon name="notepad" w="30"></ui-icon></task-button>
<div class="w"><ui-icon name="news" w="30" h="20" box="0 0 30 20"></ui-icon><fit-text w="37">11°C</fit-text><fit-text w="111">Mostly cloudy</fit-text></div>
<div class="i"><ui-icon name="caret"></ui-icon></div><div class="i"><ui-icon name="meet"></ui-icon></div><div class="i"><ui-icon name="update"></ui-icon></div><div class="i"><ui-icon name="cloud"></ui-icon></div>
<div class="k"><fit-text w="54">9:36 AM</fit-text><fit-text w="60">6/3/2023</fit-text></div>
<div class="n"><div class="b"><ui-icon name="note"></ui-icon><span>2</span></div></div>`);

define('desktop-screen', `<style>:host{display:flex;flex-direction:column;width:1920px;height:1080px;overflow:hidden}</style>
<tab-strip></tab-strip><tool-bar></tool-bar><web-page></web-page><task-bar></task-bar>`);
</script>
</body>
</html>
